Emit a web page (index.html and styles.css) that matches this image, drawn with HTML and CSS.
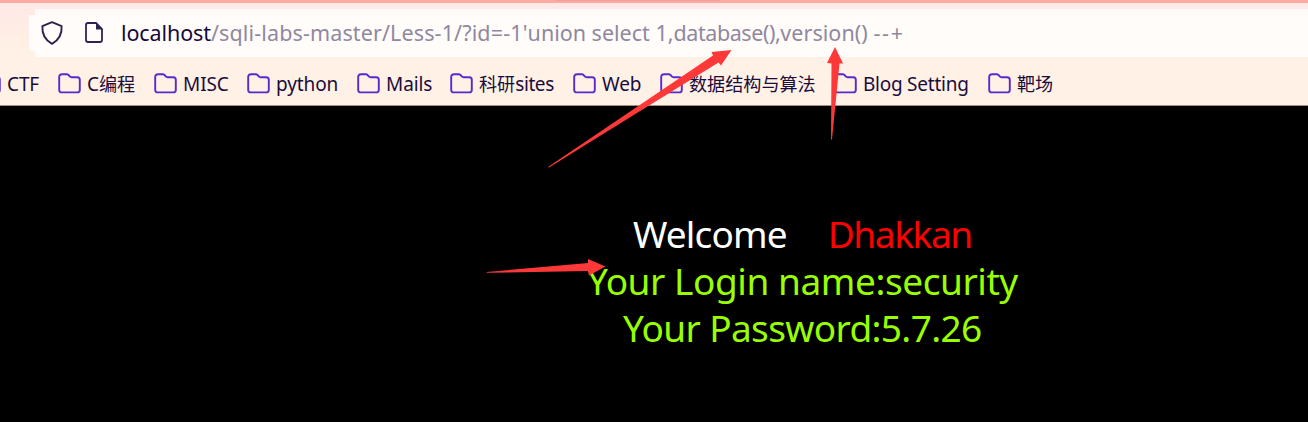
FILE: index.html
```html
<!DOCTYPE html>
<html lang="zh-CN">
<head>
<meta charset="utf-8">
<title>Less-1</title>
<link rel="stylesheet" href="styles.css">
</head>
<body>
<svg class="defs" width="0" height="0"><symbol id="folder" viewBox="0 0 23 21"><path d="M4 1.200h4.800q1 0 1.600.7l1.500 1.600q.6.700 1.600.700h5.700q2.600 0 2.600 2.600v10.100q0 2.500-2.600 2.500H3.800q-2.600 0-2.600-2.500V3.800q0-2.600 2.800-2.600z" fill="none" stroke="#592acb" stroke-width="1.9"/></symbol></svg>
<header class="chrome">
  <div class="tabline"><span class="tabshade"></span></div>
  <div class="urlbar">
    <svg class="shield" width="24" height="26" viewBox="0 0 24 26"><path d="M12 2.100 21.600 6.200Q22.400 18 12 23.800 1.600 18 2.400 6.200z" fill="none" stroke="#2c2450" stroke-width="1.9" stroke-linejoin="round"/></svg>
    <svg class="page" width="20" height="24" viewBox="0 0 20 24"><path d="M4 2h8l6 6v11q0 2-2 2H4q-2 0-2-2V4q0-2 2-2z" fill="none" stroke="#2c2450" stroke-width="1.8"/><path d="M12 1.500v7h6.500z" fill="#2c2450"/></svg>
    <div class="url"><span class="host">localhost</span><span class="path">/sqli-labs-master/Less-1/?id=-1'</span><span class="select">union select 1,</span><span class="database">database(),</span><span class="version">version() </span><span class="tail">--+</span></div>
  </div>
  <nav class="bookmarks">
    <a class="bm ctf"><svg><use href="#folder"/></svg><span>CTF</span></a>
    <a class="bm cprog"><svg><use href="#folder"/></svg><span>C<span class="cjk">编程</span></span></a>
    <a class="bm misc"><svg><use href="#folder"/></svg><span>MISC</span></a>
    <a class="bm python"><svg><use href="#folder"/></svg><span>python</span></a>
    <a class="bm mails"><svg><use href="#folder"/></svg><span>Mails</span></a>
    <a class="bm sites"><svg><use href="#folder"/></svg><span><span class="cjk">科研</span>sites</span></a>
    <a class="bm web"><svg><use href="#folder"/></svg><span>Web</span></a>
    <a class="bm algo"><svg><use href="#folder"/></svg><span class="cjk">数据结构与算法</span></a>
    <a class="bm blog"><svg><use href="#folder"/></svg><span>Blog Setting</span></a>
    <a class="bm range"><svg><use href="#folder"/></svg><span class="cjk">靶场</span></a>
  </nav>
</header>
<main class="content">
  <div class="line welcome"><span>Welcome</span><span class="name">Dhakkan</span></div>
  <div class="line login">Your Login name:security</div>
  <div class="line password">Your Password:5.7.26</div>
</main>
<svg class="arrows" width="1308" height="422" viewBox="0 0 1308 422" fill="#fd3838">
  <path d="M548 167 713 55.500 711.500 52 731.500 50 721 65.500 718.500 62.500 549 167.500z"/>
  <path d="M835 47 843 63.500H839.500L832 139.500H831L831.500 63.500 827 63z"/>
  <path d="M486.500 272 588 263V259L605.500 266.500 589 275.500 588 271 487 272.800z"/>
</svg>
</body>
</html>
```

FILE: styles.css
```css
* { box-sizing: border-box; }
body { margin: 0; width: 1308px; height: 422px; overflow: hidden; background: #000; font-family: "Noto Sans", "Noto Sans CJK SC", sans-serif; }
.defs { position: absolute; }
.chrome { height: 106px; background: linear-gradient(#ffe8e6 3px, #fff1e5 50px); border-bottom: 1px solid #a58e7e; }
.tabline { height: 3px; background: #ffaaa2; }
.tabshade { display: block; width: 165px; height: 1px; margin-left: 555px; background: #f0a09a; }
.urlbar { display: flex; align-items: flex-start; height: 48px; margin: 6px 0 0 29px; background: linear-gradient(#fffafa, #fffcf9 10px); clip-path: polygon(6px 0, 100% 0, 100% 100%, 6px 100%, 6px 42px, 0 42px, 0 6px, 6px 6px); }
.shield { margin: 11px 0 0 11px; flex: none; }
.page { margin: 12px 0 0 20px; flex: none; }
.url { margin: 9px 0 0 17px; font-size: 21.5px; line-height: 30px; white-space: pre; color: #8f889f; }
.host { color: #15093a; letter-spacing: -.1px; }
.path { letter-spacing: .13px; }
.select { letter-spacing: 0; }
.database { letter-spacing: -.42px; }
.version { letter-spacing: .05px; }
.tail { letter-spacing: 1.8px; }
.bookmarks { display: flex; margin: 16px 0 0 -22px; height: 24px; }
.bm { display: flex; flex: none; gap: 6px; font-size: 19px; line-height: 22px; letter-spacing: -.1px; color: #1b0c3c; white-space: nowrap; }
.bm svg { width: 23px; height: 21px; flex: none; }
.cjk { font-family: "Noto Sans CJK SC", sans-serif; font-size: 18.1px; line-height: 20px; letter-spacing: 0; }
.ctf { width: 80px; }
.cprog { width: 96px; }
.misc { width: 93px; }
.python { width: 110px; }
.mails { width: 93px; }
.sites { width: 123px; letter-spacing: -.4px; }
.web { width: 87px; }
.algo { width: 174px; }
.blog { width: 154px; letter-spacing: -.25px; }
.content { display: flex; flex-direction: column; align-items: flex-start; padding-top: 104px; }
.line { height: 47px; line-height: 47px; font-size: 37px; white-space: pre; color: #9f0; }
.welcome { display: flex; color: #fff; margin-left: 633px; letter-spacing: -.85px; }
.name { margin-left: 41px; color: #f00; letter-spacing: -1.4px; }
.login { margin-left: 587px; letter-spacing: -.43px; }
.password { margin-left: 623px; letter-spacing: -.62px; }
.arrows { position: absolute; left: 0; top: 0; }
```
